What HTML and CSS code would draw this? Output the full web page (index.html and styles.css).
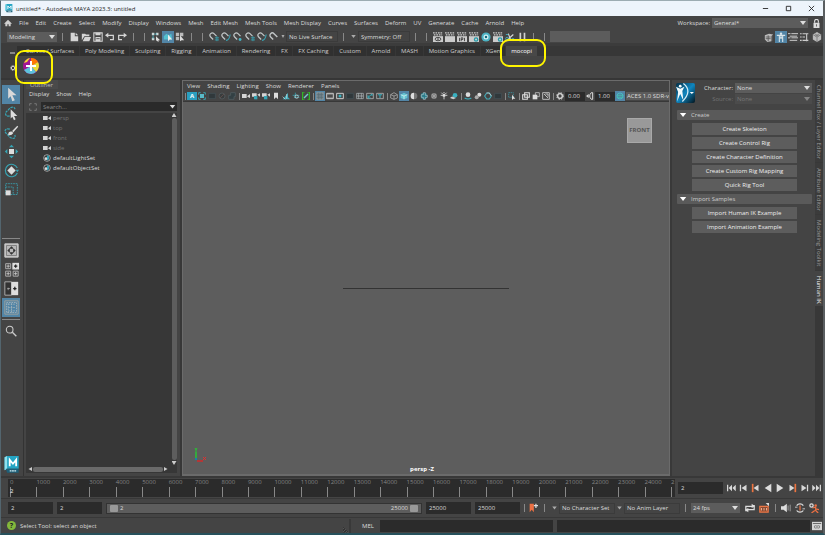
FILE: index.html
```html
<!DOCTYPE html>
<html lang="en">
<head>
<meta charset="utf-8">
<title>untitled* - Autodesk MAYA 2023.3: untitled</title>
<link rel="stylesheet" href="styles.css">
</head>
<body>
<svg class="defs" aria-hidden="true">
  <defs><linearGradient id="hg" x1="0" y1="0" x2="1" y2="1"><stop offset="0" stop-color="#062f45"/><stop offset=".5" stop-color="#0f86c0"/><stop offset="1" stop-color="#04141d"/></linearGradient></defs>
  <symbol id="logo" viewBox="0 0 12 14"><path d="M1 1l2-1h9v10H3l-2 1z" fill="#25a5c4"/><path d="M1 1l2-1v10l-2 1z" fill="#8ee0ee"/><path d="M2 10h10v3H3z" fill="#1d5f78"/><path d="M5 8V3l2.500 3L10 3v5" fill="none" stroke="#fff" stroke-width="1.400"/><path d="M5 11.600h5" stroke="#d5edf2" stroke-width="1" stroke-dasharray="1.400 .4"/></symbol>
  <symbol id="home" viewBox="0 0 12 12"><path d="M6 1L0 7h2v4h3V8h2v3h3V7h2z" fill="#d0d0d0"/></symbol>
  <symbol id="new" viewBox="0 0 12 12"><path d="M2 1h5v4h4v6H2zM8 1l3 3H8z" fill="#d4d4d4"/></symbol>
  <symbol id="open" viewBox="0 0 12 12"><path d="M1 10V2h4l1 1h4v2H4zM4.500 6H12l-2 5H2z" fill="#d4d4d4"/></symbol>
  <symbol id="save" viewBox="0 0 12 12"><path d="M1 1h10v10H1z" fill="none" stroke="#d4d4d4" stroke-width="1.300"/><path d="M3 1h6v3H3zM3 6h6v5H3z" fill="#d4d4d4"/><path d="M4 8h4" stroke="#444"/></symbol>
  <symbol id="undo" viewBox="0 0 12 12"><path d="M2 4h8v5H6" fill="none" stroke="#d4d4d4" stroke-width="1.500"/><path d="M0 4l4-3v6z" fill="#d4d4d4"/></symbol>
  <symbol id="redo" viewBox="0 0 12 12"><path d="M10 4H2v5h4" fill="none" stroke="#d4d4d4" stroke-width="1.500"/><path d="M12 4L8 1v6z" fill="#d4d4d4"/></symbol>
  <symbol id="selh" viewBox="0 0 12 12"><path d="M1 1h3v3H1zM1 7h3v3H1zM6 1h3v3H6z" fill="#ccd5d6"/><path d="M2.500 4v4M4 2.500h3" stroke="#45b4c4"/><path d="M6 5l5 5H9v2L6 10z" fill="#ddd"/></symbol>
  <symbol id="selo" viewBox="0 0 12 12"><path d="M1 9V5l3-3 3 2 3-2 1 7z" fill="#53c0cf"/><path d="M6 3l5 6H8l-2 2z" fill="#eee"/></symbol>
  <symbol id="selc" viewBox="0 0 12 12"><path d="M1 1h4v4H1zM6 1h4v4H6zM1 6h4v4H1z" fill="#bbb"/><path d="M6 4l5 6H8l-2 1z" fill="#ddd"/></symbol>
  <symbol id="snap" viewBox="0 0 12 12"><path d="M5 9L2 6a2.500 2.500 0 0 1 4-4l3 3" fill="none" stroke="#c0c5c6" stroke-width="1.500"/><path d="M7 7h5M9.500 5v6M7 9.500h5" stroke="#39a5b5"/></symbol>
  <symbol id="snap2" viewBox="0 0 12 12"><path d="M5 9L2 6a2.500 2.500 0 0 1 4-4l3 3" fill="none" stroke="#c0c5c6" stroke-width="1.500"/><path d="M6 10q4 0 5-7" stroke="#39a5b5" fill="none" stroke-width="1.300"/></symbol>
  <symbol id="snap3" viewBox="0 0 12 12"><path d="M5 9L2 6a2.500 2.500 0 0 1 4-4l3 3" fill="none" stroke="#c0c5c6" stroke-width="1.500"/><circle cx="8.500" cy="9" r="1.700" fill="#45b4c4"/></symbol>
  <symbol id="live" viewBox="0 0 12 12"><path d="M5 9L2 6a2.500 2.500 0 0 1 4-4l4 4" fill="none" stroke="#c0c5c6" stroke-width="1.700"/></symbol>
  <symbol id="clap" viewBox="0 0 12 12"><path d="M0 5h12v7H0z" fill="#ccc"/><path d="M0 1h12M1 3.500h10" stroke="#ccc" stroke-width="1.600" stroke-dasharray="2 1"/></symbol>
  <symbol id="clapeye" viewBox="0 0 12 12"><use href="#clap"/><ellipse cx="6" cy="8.500" rx="3.500" ry="2" fill="none" stroke="#333"/><circle cx="6" cy="8.500" r="1" fill="#333"/></symbol>
  <symbol id="clapipr" viewBox="0 0 12 12"><use href="#clap"/><path d="M3 7v4M5 11V7h2v2H5M9 7v4" stroke="#333" fill="none"/></symbol>
  <symbol id="clapgear" viewBox="0 0 12 12"><use href="#clap"/><circle cx="8.500" cy="9" r="2" fill="none" stroke="#239baa" stroke-width="1.500"/></symbol>
  <symbol id="hyper" viewBox="0 0 12 12"><circle cx="6" cy="6" r="5.500" fill="#4db3c4"/><circle cx="6" cy="6" r="3" fill="#d9f2f5"/><circle cx="6" cy="6" r="1.500" fill="#176b7c"/></symbol>
  <symbol id="cut" viewBox="0 0 12 12"><path d="M1 11l9-8M4 2l3 8" stroke="#ddd" stroke-width="1.300"/><circle cx="2.500" cy="8" r="1.700" fill="none" stroke="#45b4c4"/><path d="M8 8h3M1 3h3" stroke="#45b4c4"/></symbol>
  <symbol id="pause" viewBox="0 0 12 12"><path d="M3 1h2v10H3zM8 1h2v10H8z" fill="#d0d0d0"/></symbol>
  <symbol id="lock" viewBox="0 0 12 12"><path d="M2 5h8v7H2z" fill="#ddd"/><path d="M3.500 5V3a2.500 2.500 0 0 1 5 0v2" fill="none" stroke="#ddd" stroke-width="1.500"/><path d="M6 7v3" stroke="#444"/></symbol>
  <symbol id="toolkit" viewBox="0 0 12 12"><path d="M1 4l5-2 5 1-2 2v6l-5 1-3-3z" fill="#bbb"/><path d="M2 6h6M2 8h6M5 4v7M10 4v7" stroke="#555"/></symbol>
  <symbol id="person" viewBox="0 0 12 12"><circle cx="6" cy="2" r="1.500" fill="#d6e4e9"/><path d="M1 4h10M6 4v4M4 12V7h4v5M4 4v4M8 4v4" fill="none" stroke="#d6e4e9" stroke-width="1.300"/></symbol>
  <symbol id="attr" viewBox="0 0 12 12"><path d="M0 2h3M4 2h8M2 5h9M0 7h3M4 7h8M2 10h9" stroke="#ccc" stroke-width="1.200"/></symbol>
  <symbol id="chan" viewBox="0 0 12 12"><path d="M0 2h2M3 2h7M0 6h2M3 6h3M0 10h2M3 10h7M8 2v9" stroke="#ccc" stroke-width="1.300"/></symbol>
  <symbol id="poly" viewBox="0 0 12 12"><path d="M6 0l5 3v6l-5 3-5-3V3z" fill="#bbb"/><path d="M1 3l5 3 5-3M6 6v6M3 2l5 3M9 2L4 5" stroke="#777" fill="none"/></symbol>
  <symbol id="gear" viewBox="0 0 12 12"><circle cx="6" cy="6" r="3.500" fill="none" stroke="#d8d8d8" stroke-width="2"/><circle cx="6" cy="6" r="5" fill="none" stroke="#d8d8d8" stroke-width="1.500" stroke-dasharray="2 2"/></symbol>
  <symbol id="wheel" viewBox="0 0 16 16"><circle cx="8" cy="8" r="8" fill="#a31594"/><path d="M8 8V0a8 8 0 0 1 7 4z" fill="#ff7900"/><path d="M8 8l7-4a8 8 0 0 1-2 10z" fill="#e9de35"/><path d="M8 8l5 6A8 8 0 0 1 1 12z" fill="#5dc3dc"/><path d="M1 5a8 8 0 0 1 6-5L4 4z" fill="#f2d82b"/><path d="M8 3v10M3 8h10" stroke="#fff" stroke-width="2"/></symbol>
  <symbol id="arrow" viewBox="0 0 18 18"><path d="M5 1v13l3-3 2 6 3-1-3-6h5z" fill="#d8d8d8"/></symbol>
  <symbol id="lasso" viewBox="0 0 18 18"><path d="M7 12C0 13 1 7 5 5c3-5 9-5 8 0" fill="none" stroke="#37a4b4" stroke-width="1.500" stroke-dasharray="3 1"/><path d="M8 4v11l2-2 2 4 2-1-2-4h4z" fill="#ddd"/></symbol>
  <symbol id="brush" viewBox="0 0 18 18"><path d="M7 5C0 3 0 9 4 11c3 6 11 7 9 1" fill="none" stroke="#37a4b4" stroke-width="1.500" stroke-dasharray="3 1"/><path d="M16 1l-6 6 1 2 6-7zM5 12q0-5 5-4l1 2q-2 3-6 2z" fill="#ddd"/></symbol>
  <symbol id="move" viewBox="0 0 18 18"><path d="M6 6h6v6H6z" fill="#ddd"/><path d="M9 1l3 3H6zM9 17l3-3H6zM1 9l3-3v6zM17 9l-3-3v6z" fill="#37a4b4"/></symbol>
  <symbol id="rotate" viewBox="0 0 18 18"><path d="M16 6A7.500 7.500 0 1 0 16 12" fill="none" stroke="#37a4b4" stroke-width="1.400"/><path d="M9 4l5 5-5 5-5-5z" fill="#ddd"/><path d="M14 8h4l-2 3z" fill="#37a4b4"/></symbol>
  <symbol id="scale" viewBox="0 0 18 18"><path d="M2 2h14v13H2zM2 6h9v9" fill="none" stroke="#37a4b4" stroke-dasharray="2 1"/><path d="M2 10h6v6H2z" fill="#ddd"/></symbol>
  <symbol id="one" viewBox="0 0 18 18"><path d="M1 1h16v16H1z" fill="#b8b8b8" stroke="#ddd"/><path d="M3 3h12v12H3z" fill="none" stroke="#777"/><path d="M9 4l3 3H6zM9 14l3-3H6zM4 9l3-3v6zM14 9l-3-3v6z" fill="#333"/></symbol>
  <symbol id="four" viewBox="0 0 18 18"><path d="M2 2h6v6H2zM2 11h6v6H2zM11 11h6v6h-6z" fill="none" stroke="#aaa" stroke-width="1.200"/><path d="M10 1h8v8h-8z" fill="#ddd"/><path d="M3 5h4M5 3v4M3 14h4M5 12v4M12 14h4M14 12v4" stroke="#ccc"/><path d="M12 5h4M14 3v4" stroke="#222" stroke-width="1.500"/></symbol>
  <symbol id="two" viewBox="0 0 18 18"><path d="M1 1h8v16H1z" fill="#333" stroke="#bbb"/><path d="M9 1h8v16H9z" fill="#ddd"/><path d="M11 9h4M13 7v4" stroke="#222" stroke-width="1.500"/><path d="M4 9h3M5 8v3" stroke="#aaa"/></symbol>
  <symbol id="outl" viewBox="0 0 18 18"><path d="M1 1h16v16H1z" fill="none" stroke="#a5a29a"/><path d="M3 3h12v12H3zM5 4v11M9 4v11M5 5h8M5 9h8M5 13h8" stroke="#a3b3bb" stroke-dasharray="2 1" fill="none"/></symbol>
  <symbol id="search" viewBox="0 0 18 18"><circle cx="7" cy="7" r="5" fill="none" stroke="#ccc" stroke-width="1.600"/><path d="M11 11l6 6" stroke="#ccc" stroke-width="2"/></symbol>
  <symbol id="cam" viewBox="0 0 12 12"><path d="M0 3h7v6H0zM8 6l4-3v6L8 7z" fill="#d5d5d5"/></symbol>
  <symbol id="camt" viewBox="0 0 12 12"><path d="M0 2h7v5H0zM8 4l4-2v5z" fill="#d5d5d5"/><path d="M3 6h5v5H3z" fill="#37a4b4"/></symbol>
  <symbol id="set" viewBox="0 0 12 12"><circle cx="6" cy="6" r="5" fill="none" stroke="#ccc"/><path d="M6 2l3 1v5l-3 2z" fill="#30a0b4"/><circle cx="4.500" cy="7" r="2" fill="#ddd"/></symbol>
  <symbol id="frame" viewBox="0 0 12 12"><path d="M1 4V1h3M8 1h3v3M11 8v3H8M4 11H1V8" fill="none" stroke="#39a5b5" stroke-width="1.400"/><path d="M3 3h6v6H3z" fill="#58bac8"/></symbol>
  <symbol id="dim" viewBox="0 0 12 12"><path d="M1 2h10v8H1z" fill="#30383b" stroke="#46545a"/></symbol>
  <symbol id="dimc" viewBox="0 0 12 12"><circle cx="6" cy="6" r="4.500" fill="#383c3d" stroke="#596164"/><path d="M3 9l6-6" stroke="#6c5452"/></symbol>
  <symbol id="dimp" viewBox="0 0 12 12"><path d="M4 1h7v6H9v4H1V5h3z" fill="#334044" stroke="#536167"/></symbol>
  <symbol id="mark" viewBox="0 0 12 12"><path d="M3 1h6v10L6 8l-3 3z" fill="#ddd"/></symbol>
  <symbol id="plane" viewBox="0 0 12 12"><path d="M3 9l6-8v7l3 3H1z" fill="#3dacbc"/><path d="M1 7l4 4M7 3v7" stroke="#ddd"/></symbol>
  <symbol id="pan" viewBox="0 0 12 12"><path d="M1 5h10M5 1v8M3 8h8" stroke="#37a4b4" stroke-width="1.200"/><circle cx="7" cy="7" r="2.500" fill="none" stroke="#ddd"/></symbol>
  <symbol id="pencil" viewBox="0 0 12 12"><path d="M4 0H1v12h3M8 0h3v12H8" fill="none" stroke="#30c324" stroke-width="1.700"/><path d="M3 9l6-6" stroke="#78c6cc" stroke-width="2"/></symbol>
  <symbol id="grid" viewBox="0 0 12 12"><path d="M1 1h10v10H1z" fill="#76868c" stroke="#999"/><path d="M1 4h10M1 8h10M4 1v10M8 1v10" stroke="#586b73"/></symbol>
  <symbol id="gate" viewBox="0 0 12 12"><path d="M1 2h10v8H1z" fill="none" stroke="#ccc" stroke-width="1.500"/><path d="M1 4h10M1 8h10" stroke="#999"/></symbol>
  <symbol id="gateb" viewBox="0 0 12 12"><path d="M1 2h10v8H1z" fill="none" stroke="#ccc" stroke-width="1.500"/><path d="M4 4h4v4H4z" fill="#39b0c0"/></symbol>
  <symbol id="chart" viewBox="0 0 12 12"><path d="M1 2h10v8H1zM1 6h10M4 2v8M8 2v8" fill="none" stroke="#b7c0c2"/></symbol>
  <symbol id="safe" viewBox="0 0 12 12"><path d="M1 2h10v8H1z" fill="none" stroke="#ccc"/><path d="M3 8l6-5v3M3 5v4h4" stroke="#39b0c0" fill="none" stroke-width="1.400"/></symbol>
  <symbol id="safet" viewBox="0 0 12 12"><path d="M1 2h10v8H1z" fill="none" stroke="#ccc"/><path d="M3 4h6M6 4v5" stroke="#39b0c0" fill="none" stroke-width="1.600"/></symbol>
  <symbol id="wire" viewBox="0 0 12 12"><path d="M6 1l5 3v5l-5 2-5-2V4zM1 4l5 2 5-2M6 6v5" fill="none" stroke="#bcbcbc"/></symbol>
  <symbol id="solid" viewBox="0 0 12 12"><path d="M6 1l5 3v5l-5 2-5-2V4z" fill="#65c4d1"/><path d="M1 4l5 2 5-2M6 6v5" fill="none" stroke="#e7fafa"/></symbol>
  <symbol id="half" viewBox="0 0 12 12"><circle cx="6" cy="6" r="5" fill="#777"/><path d="M6 1a5 5 0 0 0 0 10z" fill="#ddd"/></symbol>
  <symbol id="tex" viewBox="0 0 12 12"><circle cx="6" cy="6" r="5" fill="#277c89"/><path d="M2 4h3V1h3v4h3v3H8v3H5V8H2z" fill="none" stroke="#b5c7cb"/></symbol>
  <symbol id="ball" viewBox="0 0 12 12"><circle cx="6" cy="6" r="4.500" fill="#858585"/><path d="M3 3l6 6M9 3L3 9" stroke="#aaa"/></symbol>
  <symbol id="light" viewBox="0 0 12 12"><circle cx="6" cy="5" r="2.500" fill="#ddd"/><path d="M6 0v2M1 5h2M9 5h2M2 1l2 2M10 1L8 3M6 7v4" stroke="#ddd" stroke-width="1.300"/></symbol>
  <symbol id="shadow" viewBox="0 0 12 12"><circle cx="7.500" cy="5" r="3.500" fill="#39b0c0"/><path d="M0 9q3-4 6-1l3 1-4 2z" fill="#ccc"/></symbol>
  <symbol id="ao" viewBox="0 0 12 12"><circle cx="6" cy="4" r="3.500" fill="#ddd"/><path d="M1 9q5 3 10 0" stroke="#39b0c0" stroke-width="1.700" fill="none"/></symbol>
  <symbol id="blur" viewBox="0 0 12 12"><circle cx="8" cy="4" r="3" fill="#ddd"/><circle cx="4" cy="8" r="3" fill="#aaa"/></symbol>
  <symbol id="hex" viewBox="0 0 12 12"><path d="M4 1.500h4L11 6l-3 4.500H4L1 6z" fill="none" stroke="#43aab7" stroke-width="1.700"/><path d="M4 1.500h4L11 6" stroke="#ddd" fill="none"/></symbol>
  <symbol id="iso" viewBox="0 0 12 12"><path d="M1 1h7v7H1z" stroke="#39a5b5" fill="none" stroke-dasharray="2 1"/><path d="M6 4v8l2-2h3z" fill="#ddd"/></symbol>
  <symbol id="xray" viewBox="0 0 12 12"><path d="M4 1h7v7H4zM1 4h7v7H1z" fill="none" stroke="#ddd" stroke-width="1.600"/></symbol>
  <symbol id="xrayb" viewBox="0 0 12 12"><path d="M5 1h6v6H5z" fill="none" stroke="#ddd"/><path d="M1 4h7v7H1z" fill="#ddd"/></symbol>
  <symbol id="xrayc" viewBox="0 0 12 12"><path d="M1 1h10v10H1zM3 3l6 6M5 3h4v4" fill="none" stroke="#ccc" stroke-width="1.300"/></symbol>
  <symbol id="gamma" viewBox="0 0 12 12"><path d="M8 1q-5 5 0 10h2V1z" fill="none" stroke="#ddd" stroke-width="1.500"/><path d="M0 6l4-3v6z" fill="#ddd"/></symbol>
  <symbol id="color" viewBox="0 0 12 12"><circle cx="6" cy="6" r="4.500" fill="none" stroke="#46c3c7" stroke-width="1.300"/><path d="M1 5h10M1 8h10" stroke="#45c0aa" stroke-width="1.300"/></symbol>
  <symbol id="hik" viewBox="0 0 18 18"><path d="M0 3l4 2 4-2-2 4 1 9-3-6-3 7 1-9z" fill="#f1fafd"/><circle cx="4" cy="2.500" r="1.300" fill="#fff"/><path d="M7 0q9 7-1 17" stroke="#d5edf7" fill="none" stroke-width="1.200"/><path d="M13 8h4l-2 2z" fill="#fff"/></symbol>
  <symbol id="start" viewBox="0 0 12 12"><path d="M0 2h1.500v8H0zM2 6l4-4v8zM6.500 6l4-4v8z" fill="#d8d8d8"/></symbol>
  <symbol id="stepb" viewBox="0 0 12 12"><path d="M1 2h1.500v8H1zM3 6l6-4v8z" fill="#d8d8d8"/></symbol>
  <symbol id="keyb" viewBox="0 0 12 12"><path d="M1 1h2v10H1z" fill="#ed7440"/><path d="M3 6l6-4v8z" fill="#d8d8d8"/></symbol>
  <symbol id="play" viewBox="0 0 12 12"><path d="M10 6L2 1v10z" fill="#ddd"/></symbol>
  <symbol id="mel" viewBox="0 0 12 12"><path d="M0 1h12v10H0z" fill="#d5d5d5"/><path d="M1 3h10" stroke="#555"/><path d="M4 5q-2 2 0 4M8 5q2 2 0 4M6 5v4" stroke="#555" fill="none"/></symbol>
  <symbol id="key" viewBox="0 0 12 12"><path d="M2 1h5v10L4.500 8 2 11z" fill="#ec7043"/><path d="M7 3h5M9.500 1v5" stroke="#ddd" stroke-width="1.500"/></symbol>
  <symbol id="loop" viewBox="0 0 12 12"><path d="M3 9H1V4h9M9 3h2v5H3" fill="none" stroke="#ddd" stroke-width="1.500"/><path d="M8 1l4 3-4 2zM4 6L0 8l4 3z" fill="#ddd"/></symbol>
  <symbol id="cache" viewBox="0 0 12 12"><path d="M1 4h10v7H1z" fill="#8a4a31" stroke="#eb7747" stroke-width="1.500"/><path d="M3 6v3M6 6v3M9 6v3" stroke="#f5c4aa"/><path d="M8 0h4v4z" fill="#ddd"/></symbol>
  <symbol id="sound" viewBox="0 0 12 12"><path d="M0 4h3l4-3v10L3 8H0z" fill="#ddd"/><path d="M8.500 3v6M11 2v8" stroke="#aaa"/></symbol>
  <symbol id="eval" viewBox="0 0 12 12"><path d="M2 3a5 5 0 0 1 8 0M10 9a5 5 0 0 1-8 0" fill="none" stroke="#ddd" stroke-width="1.500"/><path d="M6 3v6" stroke="#ec7043" stroke-width="1.500"/><path d="M0 5h3M9 7h3" stroke="#ddd"/></symbol>
  <symbol id="run" viewBox="0 0 12 12"><circle cx="8" cy="3" r="1.500" fill="#ec7043"/><path d="M4 6l4-1v4l3 3M8 7l4 1M7 9l-4 3" stroke="#ec7043" fill="none" stroke-width="1.500"/><circle cx="3" cy="3" r="2" fill="none" stroke="#ddd" stroke-width="1.500"/></symbol>
</svg>

<div class="window">
  <header class="titlebar">
    <svg class="ic9"><use href="#logo"/></svg>
    <span class="title">untitled* - Autodesk MAYA 2023.3: untitled</span>
    <div class="winbtns">
      <button aria-label="Minimize"><svg viewBox="0 0 8 8"><path d="M1 4h6" stroke="#222"/></svg></button>
      <button aria-label="Maximize"><svg viewBox="0 0 8 8"><path d="M1.500 1.500h5v5h-5z" stroke="#222" fill="none"/></svg></button>
      <button aria-label="Close"><svg viewBox="0 0 8 8"><path d="M1 1l6 6M7 1L1 7" stroke="#222"/></svg></button>
    </div>
  </header>

  <nav class="menubar">
    <svg class="ic8"><use href="#home"/></svg>
    <button>File</button><button>Edit</button><button>Create</button><button>Select</button><button>Modify</button><button>Display</button><button>Windows</button><button>Mesh</button><button>Edit Mesh</button><button>Mesh Tools</button><button>Mesh Display</button><button>Curves</button><button>Surfaces</button><button>Deform</button><button>UV</button><button>Generate</button><button>Cache</button><button>Arnold</button><button>Help</button>
    <div class="workspace">
      <label for="ws">Workspace:</label>
      <span class="drop ws"><select id="ws"><option>General*</option></select></span>
      <svg class="ic9"><use href="#lock"/></svg>
    </div>
  </nav>

  <div class="status">
    <span class="drop mode"><select aria-label="Menu set"><option>Modeling</option></select></span>
    <i class="sep"></i>
    <button class="ib" aria-label="New"><svg><use href="#new"/></svg></button><button class="ib" aria-label="Open"><svg><use href="#open"/></svg></button><button class="ib" aria-label="Save"><svg><use href="#save"/></svg></button><button class="ib" aria-label="Undo"><svg><use href="#undo"/></svg></button><button class="ib" aria-label="Redo"><svg><use href="#redo"/></svg></button>
    <i class="sep"></i><i class="sep"></i>
    <button class="ib" aria-label="Hierarchy"><svg><use href="#selh"/></svg></button><button class="ib on" aria-label="Object"><svg><use href="#selo"/></svg></button><button class="ib" aria-label="Component"><svg><use href="#selc"/></svg></button>
    <i class="sep"></i><i class="sep"></i>
    <button class="ib" aria-label="Snap grid"><svg><use href="#snap"/></svg></button><button class="ib" aria-label="Snap curve"><svg><use href="#snap2"/></svg></button><button class="ib" aria-label="Snap point"><svg><use href="#snap3"/></svg></button><button class="ib" aria-label="Snap center"><svg><use href="#snap"/></svg></button><button class="ib" aria-label="Snap plane"><svg><use href="#snap2"/></svg></button><button class="ib" aria-label="Live"><svg><use href="#live"/></svg></button>
    <i class="tri narrow"></i>
    <input class="plain" aria-label="Live surface" value="No Live Surface">
    <i class="sep"></i><i class="tri"></i>
    <input class="plain" aria-label="Symmetry" value="Symmetry: Off">
    <i class="sep"></i><i class="sep"></i>
    <button class="ib" aria-label="Render view"><svg><use href="#clapeye"/></svg></button><button class="ib" aria-label="Render"><svg><use href="#clap"/></svg></button><button class="ib" aria-label="IPR"><svg><use href="#clapipr"/></svg></button><button class="ib" aria-label="Render settings"><svg><use href="#clapgear"/></svg></button><button class="ib" aria-label="Hypershade"><svg><use href="#hyper"/></svg></button><button class="ib" aria-label="Render setup"><svg><use href="#clapgear"/></svg></button><button class="ib" aria-label="Light editor"><svg><use href="#cut"/></svg></button><button class="ib" aria-label="Pause"><svg><use href="#pause"/></svg></button>
    <i class="sep"></i><i class="sep"></i>
    <input class="coord" aria-label="Input field">
    <div class="right">
      <button class="ib" aria-label="Toolkit"><svg><use href="#toolkit"/></svg></button><button class="ib on" aria-label="HumanIK"><svg><use href="#person"/></svg></button><button class="ib" aria-label="Attributes"><svg><use href="#attr"/></svg></button><button class="ib" aria-label="Channels"><svg><use href="#chan"/></svg></button><button class="ib" aria-label="Modeling"><svg><use href="#poly"/></svg></button>
    </div>
  </div>

  <section class="shelf">
    <div class="shelfside"><i class="dash"></i><svg class="ic6"><use href="#gear"/></svg></div>
    <div class="shelfmain">
      <div class="shelftabs"><button>Curves / Surfaces</button><button>Poly Modeling</button><button>Sculpting</button><button>Rigging</button><button>Animation</button><button>Rendering</button><button>FX</button><button>FX Caching</button><button>Custom</button><button>Arnold</button><button>MASH</button><button>Motion Graphics</button><button>XGen</button><button class="cur">mocopi<span class="ring tabring"></span></button></div>
      <button class="wheel" aria-label="mocopi"><svg><use href="#wheel"/></svg><span class="ring iconring"></span></button>
    </div>
  </section>

  <main class="work">
    <aside class="toolbox">
      <button class="on" aria-label="Select"><svg><use href="#arrow"/></svg></button>
      <button aria-label="Lasso"><svg><use href="#lasso"/></svg></button>
      <button aria-label="Paint"><svg><use href="#brush"/></svg></button>
      <button aria-label="Move"><svg><use href="#move"/></svg></button>
      <button aria-label="Rotate"><svg><use href="#rotate"/></svg></button>
      <button aria-label="Scale"><svg><use href="#scale"/></svg></button>
      <div class="layouts">
        <button aria-label="Single view"><svg><use href="#one"/></svg></button>
        <button aria-label="Four view"><svg><use href="#four"/></svg></button>
        <button aria-label="Two view"><svg><use href="#two"/></svg></button>
        <button class="on" aria-label="Outliner view"><svg><use href="#outl"/></svg></button>
      </div>
      <button class="find" aria-label="Search"><svg><use href="#search"/></svg></button>
      <svg class="maya"><use href="#logo"/></svg>
    </aside>

    <section class="outliner">
      <h2>Outliner</h2>
      <nav class="pmenu"><button>Display</button><button>Show</button><button>Help</button></nav>
      <div class="find-row">
        <svg viewBox="0 0 12 12"><path d="M1 4V1h3M8 1h3v3M11 8v3H8M4 11H1V8" fill="none" stroke="#777" stroke-width="1.500"/></svg>
        <span class="findbox"><input aria-label="Search" placeholder="Search..."><i class="tri"></i></span>
      </div>
      <div class="listwrap">
        <ul>
          <li class="dimmed"><svg><use href="#cam"/></svg>persp</li>
          <li class="dimmed"><svg><use href="#cam"/></svg>top</li>
          <li class="dimmed"><svg><use href="#cam"/></svg>front</li>
          <li class="dimmed"><svg><use href="#cam"/></svg>side</li>
          <li><svg><use href="#set"/></svg>defaultLightSet</li>
          <li><svg><use href="#set"/></svg>defaultObjectSet</li>
        </ul>
        <div class="vbar"><i class="tri up"></i><b></b><i class="tri"></i></div>
      </div>
      <div class="hbar"><i class="tri lt"></i><b></b><i class="tri rt"></i></div>
    </section>

    <section class="viewport">
      <nav class="pmenu"><button>View</button><button>Shading</button><button>Lighting</button><button>Show</button><button>Renderer</button><button>Panels</button></nav>
      <div class="vtools">
        <i></i><span class="a">A</span><svg><use href="#frame"/></svg><svg><use href="#dim"/></svg><svg><use href="#dimc"/></svg><svg><use href="#dimp"/></svg>
        <i></i><svg><use href="#cam"/></svg><svg><use href="#camt"/></svg><svg><use href="#camt"/></svg><svg><use href="#mark"/></svg><svg><use href="#plane"/></svg><svg><use href="#pan"/></svg><svg><use href="#pencil"/></svg>
        <i></i><svg class="on"><use href="#grid"/></svg><svg><use href="#gate"/></svg><svg><use href="#gateb"/></svg><svg><use href="#dim"/></svg><svg><use href="#chart"/></svg><svg><use href="#safe"/></svg><svg><use href="#safet"/></svg>
        <i></i><svg><use href="#wire"/></svg><svg class="on"><use href="#solid"/></svg><svg><use href="#half"/></svg><svg><use href="#tex"/></svg><svg><use href="#ball"/></svg><svg><use href="#light"/></svg><svg><use href="#shadow"/></svg>
        <i></i><svg><use href="#ao"/></svg><svg><use href="#blur"/></svg><svg><use href="#hex"/></svg><svg><use href="#dim"/></svg>
        <i></i><svg><use href="#iso"/></svg>
        <i></i><svg><use href="#xray"/></svg><svg><use href="#xrayb"/></svg><svg><use href="#xrayc"/></svg>
        <i></i><svg><use href="#gear"/></svg><input aria-label="Exposure" value="0.00"><svg><use href="#gamma"/></svg><input aria-label="Gamma" value="1.00"><svg class="on"><use href="#color"/></svg><span class="aces">ACES 1.0 SDR-v</span>
      </div>
      <div class="canvas">
        <div class="cube">FRONT</div>
        <div class="horizon"></div>
        <svg class="axis" viewBox="0 0 12 15"><path d="M2 4v8" stroke="#29c334" stroke-width="1.500"/><path d="M1 0l1 2 1-2M2 2v2" stroke="#29c334" fill="none"/><path d="M3 13h6" stroke="#d12b2b" stroke-width="1.500"/><path d="M9 9l3 3M12 9l-3 3" stroke="#e03030"/><path d="M1 10h2v2H1z" fill="#157faf"/></svg>
        <span class="camname">persp -Z</span>
      </div>
    </section>

    <section class="hik">
      <div class="charrow">
        <svg class="hikic"><rect width="100%" height="100%" rx="2" fill="url(#hg)"/><use href="#hik"/></svg>
        <div class="chargrid">
          <label for="ch">Character:</label><span class="drop"><select id="ch"><option>None</option></select></span>
          <label class="off" for="src">Source:</label><span class="drop off"><select id="src" disabled><option>None</option></select></span>
        </div>
      </div>
      <h3><i class="tri"></i>Create</h3>
      <div class="btns"><button>Create Skeleton</button><button>Create Control Rig</button><button>Create Character Definition</button><button>Create Custom Rig Mapping</button><button>Quick Rig Tool</button></div>
      <h3><i class="tri"></i>Import Samples</h3>
      <div class="btns"><button>Import Human IK Example</button><button>Import Animation Example</button></div>
    </section>

    <nav class="sidetabs"><button>Channel Box / Layer Editor</button><button>Attribute Editor</button><button>Modeling Toolkit</button><button class="cur">Human IK</button></nav>
  </main>

  <section class="time">
    <div class="ticks">
      <span class="now">0<em>2</em></span><span>1000</span><span>2000</span><span>3000</span><span>4000</span><span>5000</span><span>6000</span><span>7000</span><span>8000</span><span>9000</span><span>10000</span><span>11000</span><span>12000</span><span>13000</span><span>14000</span><span>15000</span><span>16000</span><span>17000</span><span>18000</span><span>19000</span><span>20000</span><span>21000</span><span>22000</span><span>23000</span><span>24000</span><span class="last">2</span>
    </div>
    <input class="field" aria-label="Current frame" value="2">
    <div class="transport">
      <button class="ib" aria-label="Go to start"><svg><use href="#start"/></svg></button><button class="ib" aria-label="Step back"><svg><use href="#stepb"/></svg></button><button class="ib" aria-label="Previous key"><svg><use href="#keyb"/></svg></button><button class="ib" aria-label="Play backwards"><svg class="flip"><use href="#play"/></svg></button><button class="ib" aria-label="Play"><svg><use href="#play"/></svg></button><button class="ib" aria-label="Next key"><svg class="flip"><use href="#keyb"/></svg></button><button class="ib" aria-label="Step forward"><svg class="flip"><use href="#stepb"/></svg></button><button class="ib" aria-label="Go to end"><svg class="flip"><use href="#start"/></svg></button>
    </div>
  </section>

  <section class="range">
    <input class="field" aria-label="Animation start" value="2">
    <input class="field" aria-label="Range start" value="2">
    <div class="slider"><b></b><span>2</span><span class="end">25000</span><b></b></div>
    <input class="field" aria-label="Range end" value="25000">
    <input class="field" aria-label="Animation end" value="25000">
    <div class="opts">
      <i class="sep short"></i><button class="ib" aria-label="Bookmark"><svg><use href="#key"/></svg></button><i class="sep"></i><i class="tri"></i>
      <input class="plain" aria-label="Character set" value="No Character Set"><i class="tri"></i>
      <input class="plain" aria-label="Anim layer" value="No Anim Layer"><i class="sep"></i>
      <span class="drop fps"><select aria-label="Frame rate"><option>24 fps</option></select></span>
    </div>
    <div class="prefs">
      <button class="ib" aria-label="Loop"><svg><use href="#loop"/></svg></button><button class="ib" aria-label="Cached playback"><svg><use href="#cache"/></svg></button><i class="sep short"></i><button class="ib" aria-label="Sound"><svg><use href="#sound"/></svg></button><button class="ib" aria-label="Evaluation"><svg><use href="#eval"/></svg></button><button class="ib" aria-label="Preferences"><svg><use href="#run"/></svg></button>
    </div>
  </section>

  <footer class="help">
    <div class="helptext"><b>?</b><span>Select Tool: select an object</span><i class="grip"></i></div>
    <label for="mel">MEL</label>
    <input id="mel" class="cmd">
    <input class="res" aria-label="Result">
    <button class="ib" aria-label="Script editor"><svg><use href="#mel"/></svg></button>
  </footer>
</div>
</body>
</html>
```
FILE: styles.css
```css
* { box-sizing: border-box; }
body { margin: 0; background: #3f5c68; font: 6px/8px "Open Sans", "Noto Sans", sans-serif; color: #dcdcdc; }
.defs { position: absolute; width: 0; height: 0; }
button, input, select { font: inherit; color: inherit; background: none; border: 0; padding: 0; margin: 0; border-radius: 0; min-width: 0; white-space: nowrap; }
select { appearance: none; width: 100%; height: 100%; padding-left: 2px; opacity: 1; }
svg { display: block; flex: none; }
i, em { font-style: normal; }
h2, h3, ul { margin: 0; padding: 0; font-weight: normal; font-size: inherit; list-style: none; }

.window { display: flex; flex-direction: column; min-height: 100vh; background: #444; border: solid; border-width: 1px 2px 2px 1px; border-color: #9cacb2 #5a5e60 #27515c #53656e; }
.ic6 { width: 6px; height: 6px; }
.ic8 { width: 8px; height: 8px; }
.ic9 { width: 9px; height: 9px; }

.titlebar { display: flex; align-items: center; height: 15px; padding-left: 3px; background: #edf4fb; color: #222; }
.title { margin-left: 3px; }
.winbtns { display: flex; margin-left: auto; }
.winbtns button { width: 23px; display: flex; justify-content: center; }
.winbtns svg { width: 7px; height: 7px; }

.menubar { display: flex; align-items: center; height: 14px; gap: 7px; padding-left: 3px; }
.workspace { display: flex; align-items: center; gap: 2px; margin-left: auto; padding-right: 2px; }
.workspace svg { margin-left: 2px; }
.drop { position: relative; display: block; height: 10px; background: #5c5c5c; line-height: 10px; }
.drop::after { content: ""; position: absolute; right: 2px; top: 3px; border: 3px solid transparent; border-top: 4px solid #ddd; border-bottom: 0; pointer-events: none; }
.ws { width: 96px; }

.status { display: flex; align-items: center; height: 13px; padding-left: 6px; }
.mode { width: 50px; }
.sep { flex: none; width: 11px; height: 8px; background: linear-gradient(#888, #888) center / 1px 100% no-repeat; }
.sep.short { width: 6px; }
.ib { flex: none; width: 12px; height: 12px; display: flex; align-items: center; justify-content: center; }
.ib svg { width: 10px; height: 10px; }
.on { background: #5285a6; }
.tri { flex: none; width: 9px; height: 4px; background: #aaa; clip-path: polygon(25% 10%, 75% 10%, 50% 90%); }
.tri.narrow { width: 6px; }
.plain { width: 52px; height: 11px; padding-left: 2px; border: 1px solid #3b3b3b; }
.coord { width: 60px; height: 11px; background: #5c5c5c; }
.right { display: flex; margin-left: auto; }

.shelf { display: flex; height: 35px; border-top: 3px solid #3c3c3c; }
.shelfside { width: 16px; padding: 6px 0 0 9px; display: flex; flex-direction: column; gap: 11px; background: #3c3c3c; }
.dash { width: 5px; height: 2px; background: #888; }
.shelfmain { flex: 1; min-width: 0; }
.shelftabs { display: flex; height: 10px; background: #373737; gap: 1px; padding-right: 286px; }
.shelftabs button { position: relative; flex: 1 1 auto; height: 10px; line-height: 11px; text-align: center; background: #303030; color: #ccc; }
.shelftabs button:first-child { padding-left: 4px; }
.shelftabs .cur { background: #484848; color: #fff; }
.wheel { position: relative; display: block; margin: 2px 0 0 6px; width: 16px; height: 16px; }
.wheel svg { width: 16px; height: 16px; }
.ring { position: absolute; z-index: 2; border: 2px solid #fff500; border-radius: 9px; }
.iconring { left: -8px; top: -8px; width: 38px; height: 34px; }
.tabring { left: -6px; top: -7px; width: 46px; height: 28px; }

.work { display: flex; flex: 1; min-height: 396px; border-top: 2px solid #363636; }
.toolbox { width: 23px; padding: 5px 3px 1px 1px; display: flex; flex-direction: column; border-right: 1px solid #333; }
.toolbox button { flex: none; height: 19px; display: flex; align-items: center; justify-content: center; }
.toolbox svg { width: 15px; height: 15px; }
.layouts { margin: 39px 0 1px; border: solid #888; border-width: 1px 0; padding: 2px 0; }
.layouts button { width: 100%; }
.toolbox .find svg { width: 12px; height: 12px; }
.toolbox .maya { margin: auto auto 1px; width: 16px; height: 18px; }

.outliner { width: 158px; display: flex; flex-direction: column; padding: 0 3px 0 2px; border-right: 2px solid #373737; }
h2 { align-self: flex-start; padding: 1px 5px 0 4px; background: #4a4a4a; color: #bbb; }
.pmenu { display: flex; gap: 7px; height: 10px; align-items: center; padding-left: 4px; }
.outliner .pmenu { padding-left: 3px; }
.find-row { display: flex; align-items: center; gap: 4px; padding: 3px 0 2px 3px; }
.find-row > svg { width: 8px; height: 8px; }
.findbox { flex: 1; display: flex; align-items: center; height: 9px; background: #2a2a2a; }
.findbox input { flex: 1; height: 9px; padding-left: 2px; }
.findbox input::placeholder { color: #888; opacity: 1; }
.findbox .tri { background: #ddd; clip-path: polygon(15% 0, 85% 0, 50% 100%); }
.listwrap { flex: 1; display: flex; background: #373737; }
.listwrap ul { flex: 1; padding-left: 17px; }
.listwrap li { display: flex; align-items: center; gap: 2px; height: 10px; }
.listwrap li svg { width: 8px; height: 8px; }
.listwrap .dimmed { color: #737373; }
.vbar { width: 6px; display: flex; flex-direction: column; align-items: center; gap: 1px; }
.vbar b { flex: 1; width: 5px; background: #5d5d5d; border-radius: 2px; }
.vbar .tri, .hbar .tri { width: 5px; height: 4px; background: #ccc; clip-path: polygon(0 0, 100% 0, 50% 100%); }
.vbar .tri.up { clip-path: polygon(0 100%, 100% 100%, 50% 0); }
.hbar { display: flex; align-items: center; height: 8px; padding: 0 8px 0 1px; gap: 1px; margin-bottom: 3px; background: #373737; }
.hbar b { flex: 1; height: 5px; background: #6a6a6a; border-radius: 2px; }
.hbar .tri.lt { clip-path: polygon(100% 0, 100% 100%, 30% 50%); }
.hbar .tri.rt { clip-path: polygon(0 0, 0 100%, 70% 50%); }

.viewport { flex: 1; min-width: 0; display: flex; flex-direction: column; border: 1px solid #6b6b6b; border-bottom-width: 2px; }
.vtools { display: flex; align-items: center; height: 11px; overflow: hidden; border-bottom: 1px solid #383838; }
.vtools > i { flex: none; width: 4px; height: 7px; background: linear-gradient(#888, #888) center / 1px 100% no-repeat; }
.vtools svg { width: 10px; height: 10px; padding: 1px; }
.a { flex: none; width: 10px; height: 8px; background: #2a9fc0; color: #fff; text-align: center; font-weight: bold; }
.vtools input { flex: none; width: 20px; height: 9px; background: #2b2b2b; padding-left: 3px; }
.aces { flex: 1; min-width: 0; overflow: hidden; white-space: nowrap; background: #5c5c5c; padding-left: 1px; margin-left: 1px; }
.canvas { position: relative; flex: 1; background: #5d5d5d; }
.cube { position: absolute; right: 17px; top: 16px; width: 25px; height: 25px; background: #999; border: 1px solid #a9a9a9; color: #555; font-weight: bold; line-height: 23px; text-align: center; }
.horizon { position: absolute; left: 33%; right: 33%; top: 50%; height: 1px; background: #333; }
.axis { position: absolute; left: 11px; bottom: 11px; width: 12px; height: 15px; }
.camname { position: absolute; left: 0; right: 8px; bottom: 1px; text-align: center; color: #fff; font-weight: bold; }

.hik { width: 145px; padding: 3px 3px 0 5px; border-left: 2px solid #393939; }
.charrow { display: flex; gap: 5px; margin-bottom: 6px; }
.hikic { width: 19px; height: 20px; margin-left: -1px; }
.chargrid { flex: 1; display: grid; grid-template-columns: 1fr 77px; gap: 1px 2px; align-items: center; text-align: right; }
.chargrid .off { color: #737373; }
.drop.off { background: #4b4b4b; }
.drop.off::after { opacity: .4; }
select:disabled { color: #777; }
h3 { display: flex; align-items: center; gap: 3px; height: 10px; padding-left: 2px; background: #5a5a5a; border-radius: 1px; color: #ccc; }
h3 .tri { background: #fff; clip-path: polygon(10% 0, 80% 0, 45% 100%); }
.btns { display: flex; flex-direction: column; gap: 2px; padding: 3px 15px 3px; }
.btns button { height: 12px; line-height: 12px; background: #5d5d5d; color: #eee; }

.sidetabs { width: 8px; display: flex; flex-direction: column; gap: 1px; background: #383838; }
.sidetabs button { writing-mode: vertical-rl; width: 8px; padding: 5px 0 3px; text-align: left; background: #3b3b3b; color: #999; }
.sidetabs .cur { background: #444; color: #eee; }

.time { display: flex; align-items: center; height: 22px; padding-left: 7px; border-top: 2px solid #383838; }
.ticks { flex: 1; min-width: 0; display: flex; height: 18px; padding-left: 2px; overflow: hidden; background: #2b2b2b; color: #858585; }
.ticks span { position: relative; flex: 1 1 0; min-width: 0; line-height: 7px; background: linear-gradient(#888, #888) left bottom / 1px 10px no-repeat; }
.ticks .last { flex: 0 0 4px; }
.ticks em { display: block; color: #eee; line-height: 10px; }
.field { flex: none; width: 45px; height: 12px; padding-left: 3px; background: #2b2b2b; }
.time .field { margin: 0 3px; }
.transport { display: flex; margin-right: 1px; }
.flip { transform: scaleX(-1); }

.range { display: flex; align-items: center; gap: 4px; height: 19px; padding: 0 3px 0 7px; border-top: 1px solid #383838; }
.slider { flex: 1; min-width: 0; display: flex; align-items: center; gap: 2px; height: 11px; padding: 0 3px; background: #5d5d5d; border: 1px solid #333; }
.slider b { width: 8px; height: 7px; background: #999; border-radius: 1px; }
.slider .end { margin-left: auto; }
.opts, .prefs { display: flex; align-items: center; }
.opts { margin-left: -3px; }
.prefs { gap: 2px; }
.opts .plain { width: 56px; }
.fps { width: 49px; }

.help { display: flex; align-items: center; height: 16px; border-top: 1px solid #383838; }
.helptext { display: flex; align-items: center; gap: 4px; width: 350px; height: 14px; padding-left: 6px; border-right: 2px solid #393939; }
.helptext b { width: 9px; height: 9px; border-radius: 50%; background: #83b83b; color: #222; text-align: center; line-height: 9px; font-size: 7px; }
.grip { width: 6px; height: 6px; margin: auto 0 0 auto; background: repeating-linear-gradient(135deg, #333 0 1px, #555 1px 2px); clip-path: polygon(0 100%, 0 0, 100% 100%); }
.help label { width: 29px; padding-left: 11px; }
.help input { height: 12px; background: #2b2b2b; }
.cmd { flex: 172; }
.res { flex: 251; margin: 0 1px 0 4px; }
```
